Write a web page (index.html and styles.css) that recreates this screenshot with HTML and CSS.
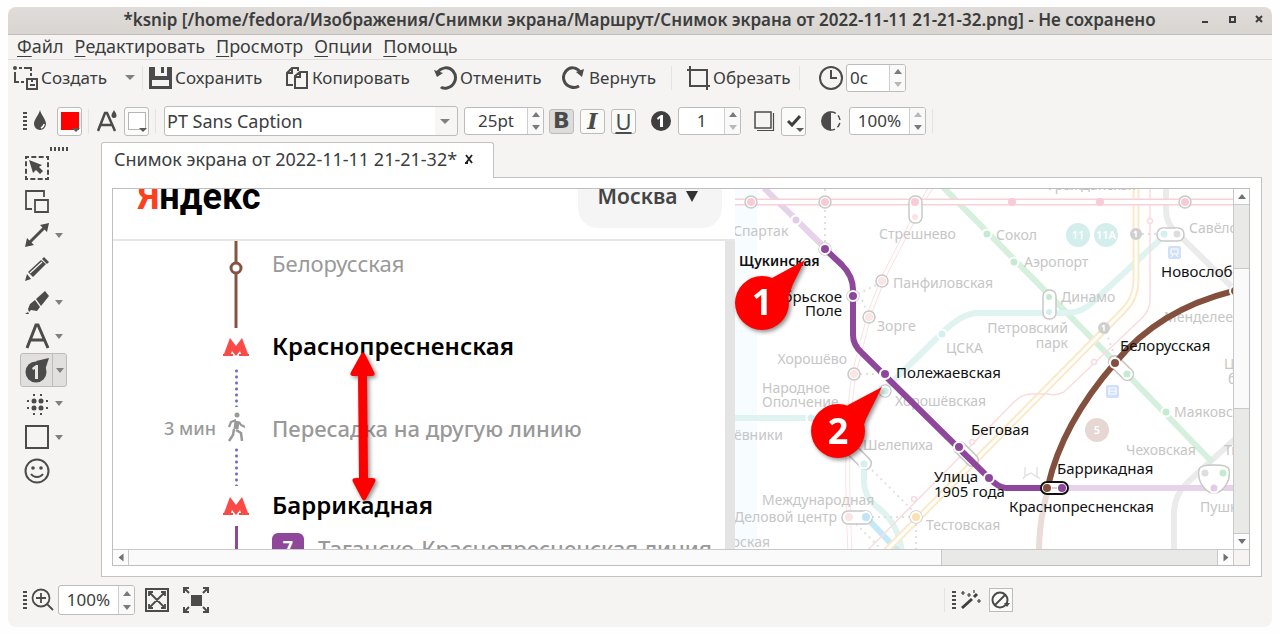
FILE: index.html
```html
<!DOCTYPE html>
<html lang="ru">
<head>
<meta charset="utf-8">
<title>ksnip</title>
<meta name="viewport" content="width=device-width, initial-scale=1">
<link rel="stylesheet" href="styles.css">
</head>
<body>
<div class="window">
  <header class="titlebar">
    <h1 class="title">*ksnip [/home/fedora/Изображения/Снимки экрана/Маршрут/Снимок экрана от 2022-11-11 21-21-32.png] - Не сохранено</h1>
    <div class="window-buttons">
      <button type="button" aria-label="Свернуть"><svg width="9" height="9"><path d="M1 7h6" stroke="#3b3d3e" stroke-width="2"/></svg></button>
      <button type="button" aria-label="Развернуть"><svg width="9" height="9"><rect x="2" y="2" width="5" height="5" fill="none" stroke="#3b3d3e" stroke-width="2"/></svg></button>
      <button type="button" aria-label="Закрыть"><svg width="9" height="9"><path d="M1 1l6 6M7 1l-6 6" stroke="#3b3d3e" stroke-width="2"/></svg></button>
    </div>
  </header>

  <nav class="menubar">
    <button type="button"><u>Ф</u>айл</button>
    <button type="button"><u>Р</u>едактировать</button>
    <button type="button"><u>П</u>росмотр</button>
    <button type="button"><u>О</u>пции</button>
    <button type="button"><u>П</u>омощь</button>
  </nav>

  <div class="toolbar actions">
    <button type="button" class="action action-new">
      <svg width="26" height="26" viewBox="0 0 26 26" fill="none" stroke="#4b4b4c" stroke-width="2"><circle cx="2" cy="3" r="2" fill="#4b4b4c" stroke="none"/><path d="M6 3h3M11 3h7v3M18 8v3M2 7v10h4M8 17h3"/><path d="M14 14h10v10H14z"/><path d="M17 20h5M19 14v3" /></svg>
      Создать
    </button>
    <button type="button" class="more" aria-label="Варианты снимка"><i class="caret"></i></button>
    <i class="separator"></i>
    <button type="button" class="action action-save">
      <svg width="24" height="24" viewBox="0 0 24 24" fill="#4b4b4c"><path fill-rule="evenodd" d="M0 1h6v9h12V1h5v22H0zM3 14v6h17v-6z"/><path d="M12 1h3v6h-3z"/></svg>
      Сохранить
    </button>
    <button type="button" class="action action-copy">
      <svg width="24" height="24" viewBox="0 0 24 24" fill="none" stroke="#4b4b4c" stroke-width="2"><path d="M7 19H1V7l5-5h6v3M6 2v5H1M9 22V10l5-4h7v16zM14 6v5H9"/></svg>
      Копировать
    </button>
    <button type="button" class="action action-undo">
      <svg width="24" height="24" viewBox="0 0 24 24" fill="none" stroke="#4b4b4c" stroke-width="3"><path d="M3 7C7 1 15 0 19 5c5 6 2 15-6 17-3 .5-5 0-6-1"/><path d="M0 4l3 7 6-4z" fill="#4b4b4c" stroke="none"/></svg>
      Отменить
    </button>
    <button type="button" class="action action-redo">
      <svg width="24" height="24" viewBox="0 0 24 24" fill="none" stroke="#4b4b4c" stroke-width="3"><path d="M19 7C15 1 8 0 4 5c-5 6-2 14 5 16 3 1 5 1 8-1"/><path d="M22 3l-2 8-6-5z" fill="#4b4b4c" stroke="none"/></svg>
      Вернуть
    </button>
    <i class="separator"></i>
    <button type="button" class="action action-crop">
      <svg width="24" height="24" viewBox="0 0 24 24" fill="none" stroke="#4b4b4c" stroke-width="2"><path d="M0 4h20v20M3 0v20h20" /></svg>
      Обрезать
    </button>
    <i class="separator"></i>
    <label class="icon" for="delay"><svg width="26" height="26" viewBox="0 0 26 26" fill="none" stroke="#4b4b4c" stroke-width="2"><circle cx="13" cy="13" r="11"/><path d="M13 5v8h6"/></svg></label>
    <div class="spin spin-delay"><input id="delay" type="text" value="0с" aria-label="Задержка"><div class="steps"><button type="button" aria-label="Больше"></button><button type="button" class="off" aria-label="Меньше"></button></div></div>
  </div>

  <div class="toolbar options">
    <i class="grip"></i>
    <span class="icon icon-drop"><svg width="14" height="22" viewBox="0 0 14 22"><path d="M7 0c1 5 6 9 6 14a6 6 0 0 1-12 0C1 9 6 5 7 0z" fill="#4b4b4c"/><path d="M8 18c2-1 3-2 3-4" stroke="#fff" stroke-width="1.500" fill="none"/></svg></span>
    <button type="button" class="swatch" aria-label="Цвет"><i class="chip red"></i><i class="caret"></i></button>
    <i class="separator"></i>
    <span class="icon icon-font"><svg width="20" height="22" viewBox="0 0 20 22" fill="none" stroke="#4b4b4c" stroke-width="2.500"><path d="M1 21L8 3h2l8 18M4 15h11"/><path d="M17 0c1 2 2.500 3.500 2.500 5.500a2.500 2.500 0 0 1-5 0C14.500 3.500 16 2 17 0z" fill="#4b4b4c" stroke="none"/></svg></span>
    <button type="button" class="swatch" aria-label="Цвет текста"><i class="chip"></i><i class="caret"></i></button>
    <i class="separator"></i>
    <div class="font-select"><select aria-label="Шрифт"><option>PT Sans Caption</option></select><i class="caret"></i></div>
    <div class="spin spin-size"><input type="text" value="25pt" aria-label="Размер шрифта"><div class="steps"><button type="button" aria-label="Больше"></button><button type="button" aria-label="Меньше"></button></div></div>
    <div class="styles">
      <button type="button" class="on" aria-label="Полужирный"><b>B</b></button>
      <button type="button" aria-label="Курсив"><em>I</em></button>
      <button type="button" aria-label="Подчёркнутый"><u>U</u></button>
    </div>
    <span class="icon icon-number"><svg width="20" height="20" viewBox="0 0 20 20"><circle cx="10" cy="10" r="10" fill="#3f3f40"/><path d="M6 7l4-3h2v12H9V7L7 9z" fill="#fff"/></svg></span>
    <div class="spin spin-number"><input type="text" value="1" aria-label="Номер"><div class="steps"><button type="button" aria-label="Больше"></button><button type="button" class="off" aria-label="Меньше"></button></div></div>
    <span class="icon icon-shadow"><svg width="22" height="22" viewBox="0 0 22 22" fill="none" stroke="#4b4b4c"><path d="M2 2h16v16H2z" stroke-width="1.500"/><path d="M20.500 3v17.500H4" stroke-width="1.200"/></svg></span>
    <button type="button" class="swatch" aria-label="Тень"><svg width="14" height="12" viewBox="0 0 14 12"><path d="M1 6l4 4 8-9" fill="none" stroke="#3f3f40" stroke-width="3"/></svg><i class="caret"></i></button>
    <span class="icon icon-opacity"><svg width="22" height="22" viewBox="0 0 22 22"><path d="M11 1a10 10 0 0 0 0 20z" fill="#4b4b4c"/><path d="M11 2a9 9 0 0 1 0 18" fill="none" stroke="#4b4b4c" stroke-width="1.500" stroke-dasharray="5 3"/></svg></span>
    <div class="spin spin-opacity"><input type="text" value="100%" aria-label="Непрозрачность"><div class="steps"><button type="button" class="off" aria-label="Больше"></button><button type="button" aria-label="Меньше"></button></div></div>
    <i class="separator"></i>
  </div>

  <div class="main">
    <aside class="tools">
      <i class="grip flat"></i>
      <ul>
        <li><button type="button" aria-label="Выделение"><svg width="26" height="26" viewBox="0 0 26 26"><path d="M2 2h22v22H2z" fill="none" stroke="#4b4b4c" stroke-width="2" stroke-dasharray="5 2.330" stroke-dashoffset="2"/><path d="M5 5l13 5-3 2 4 4-3 3-4-4-3 3z" fill="#4b4b4c"/></svg></button></li>
        <li><button type="button" aria-label="Дублировать"><svg width="26" height="26" viewBox="0 0 26 26" fill="none" stroke="#4b4b4c" stroke-width="1.800"><path d="M8 20H2V2h18v6"/><path d="M11 11h13v12H11z"/></svg></button></li>
        <li><button type="button" aria-label="Стрелка"><svg width="26" height="26" viewBox="0 0 26 26" fill="#4b4b4c"><path d="M5 21L21 5" stroke="#4b4b4c" stroke-width="3"/><path d="M25 1l-2 9-7-7zM1 25l2-9 7 7z"/></svg></button><button type="button" class="more" aria-label="Виды стрелок"><i class="caret"></i></button></li>
        <li><button type="button" aria-label="Карандаш"><svg width="26" height="26" viewBox="0 0 26 26" fill="#4b4b4c"><path d="M1 25l2-7 4 5zM4 16L17 4l5 4L9 21zM18 3l2-2 5 5-2 2z"/><path d="M6 17L18 6" stroke="#f5f4f2" stroke-width="1.300"/></svg></button></li>
        <li><button type="button" aria-label="Маркер"><svg width="26" height="26" viewBox="0 0 26 26" fill="#4b4b4c"><path d="M12 9l9-8 4 5-8 10zM11 10l5 7-3 4-6-1-2 2-1-3 2-5zM1 24l3-2 1 2z"/></svg></button><button type="button" class="more" aria-label="Виды маркеров"><i class="caret"></i></button></li>
        <li><button type="button" aria-label="Текст"><svg width="26" height="26" viewBox="0 0 26 26"><path d="M3 25L12 2h2l10 23M6 17h14" fill="none" stroke="#4b4b4c" stroke-width="3"/></svg></button><button type="button" class="more" aria-label="Виды текста"><i class="caret"></i></button></li>
        <li class="active"><button type="button" aria-label="Номер"><svg width="26" height="26" viewBox="0 0 26 26"><circle cx="12" cy="15" r="10.500" fill="#4b4b4c"/><path d="M12 4l13-3-4 12z" fill="#4b4b4c"/><path d="M8 11l4-3h2v14h-3V12l-2 1z" fill="#e6e6e5"/></svg></button><button type="button" class="more" aria-label="Виды номеров"><i class="caret"></i></button></li>
        <li><button type="button" aria-label="Размытие"><svg width="26" height="26" viewBox="0 0 26 26" fill="#4b4b4c"><circle cx="10" cy="10" r="2.500"/><circle cx="17" cy="10" r="2.500"/><circle cx="10" cy="17" r="2.500"/><circle cx="17" cy="17" r="2.500"/><path d="M9 3h2v2H9zM16 3h2v2h-2zM9 22h2v2H9zM16 22h2v2h-2zM3 9h2v2H3zM3 16h2v2H3zM22 9h2v2h-2zM22 16h2v2h-2z"/></svg></button><button type="button" class="more" aria-label="Виды размытия"><i class="caret"></i></button></li>
        <li><button type="button" aria-label="Прямоугольник"><svg width="26" height="26" viewBox="0 0 26 26"><path d="M2 2h22v22H2z" fill="none" stroke="#4b4b4c" stroke-width="2"/></svg></button><button type="button" class="more" aria-label="Виды фигур"><i class="caret"></i></button></li>
        <li><button type="button" aria-label="Стикер"><svg width="26" height="26" viewBox="0 0 26 26" fill="none" stroke="#4b4b4c" stroke-width="2"><circle cx="13" cy="13" r="11.500"/><path d="M7 16c3 4 9 4 12 0"/><circle cx="9" cy="10" r="1.800" fill="#4b4b4c" stroke="none"/><circle cx="17" cy="10" r="1.800" fill="#4b4b4c" stroke="none"/></svg></button></li>
      </ul>
    </aside>

    <section class="document">
      <div class="tab">Снимок экрана от 2022-11-11 21-21-32* <button type="button" aria-label="Закрыть вкладку"><svg width="10" height="10" viewBox="0 0 10 10"><path d="M2 1l6 8M8 1L2 9M1 9h3" stroke="#222" stroke-width="1.800" fill="none"/></svg></button></div>
      <div class="page">
        <div class="frame">
          <div class="canvas">
            <div class="route">
              <div class="route-head"><span class="logo"><i>Я</i>ндекс</span><button type="button" class="city">Москва <i></i></button></div>
              <ol class="steps-list">
                <li class="row row-pass"><span class="track"><svg width="16" height="87"><path d="M8 0v87" stroke="#875342" stroke-width="3"/><circle cx="8" cy="27" r="5" fill="#fff" stroke="#875342" stroke-width="3"/></svg></span><span class="muted">Белорусская</span></li>
                <li class="row row-station"><span class="track"><svg width="26" height="18" viewBox="0 0 26 18"><path d="M7 0l6 8 6-8 6 16h1v2h-10v-2h2l-1-3-4 5-4-5-1 3h2v2H0v-2h1z" fill="#fb4a46"/></svg></span><strong>Краснопресненская</strong></li>
                <li class="row row-walk"><span class="time">3 мин</span><span class="track walk"><i class="dots"></i><svg width="18" height="30" viewBox="0 0 18 30" fill="none" stroke="#999" stroke-width="2.200"><circle cx="10" cy="3" r="2.500" fill="#999" stroke="none"/><path d="M9 8l-5 2-2 5M12 10l2 3 4 2"/><path d="M10 9L9 17" stroke-width="5"/><path d="M9 18l5 3 1 8M7 17l-1 6-4 6" stroke-width="2.500"/></svg><i class="dots"></i></span><b class="muted">Пересадка на другую линию</b></li>
                <li class="row row-station last"><span class="track"><svg width="26" height="18" viewBox="0 0 26 18"><path d="M7 0l6 8 6-8 6 16h1v2h-10v-2h2l-1-3-4 5-4-5-1 3h2v2H0v-2h1z" fill="#fb4a46"/></svg></span><strong>Баррикадная</strong></li>
                <li class="row row-line"><span class="track purple"></span><span class="line"><b class="badge">7</b><b class="muted">Таганско-Краснопресненская линия</b></span></li>
              </ol>
            </div>
            <svg class="map" role="img" aria-label="Схема метро">
              <g transform="translate(-735 -189)" fill="none">
                <rect x="735" y="189" width="22" height="361" fill="#f7fcfe"/>
                <g stroke-width="6">
                  <path d="M1166 186v24q0 12 8 20l62 61M1236 438l-50 46q-12 12-12 30v40" stroke="#ebebeb"/>
                  <path d="M942 186l185 188L1212 462" stroke="#d5f0dc"/>
                  <path d="M880 394l62-61q20-20 36-20h88q16 0 28-12l72-67M735 418h72M864 460v22q0 14 12 24 24 18 26 48" stroke="#dff3f1"/>
                  <path d="M764 188l61 60M1062 488h174" stroke="#e6d3ea"/>
                  <path d="M1048 490q-9 30-9 62" stroke="#e9dcd9"/>
                  <path d="M866 517l32 34" stroke="#c6e9f7"/>
                </g>
                <path d="M1136 186v94q0 18-12 30L885 552" stroke="#fbeac8" stroke-width="7"/>
                <path d="M1136 186v94q0 18-12 30L885 552" stroke="#fff" stroke-width="3"/>
                <path d="M1150 186v114q0 10-8 18l-78 74q-8 4-16 2h-16q-10 0-18 8L866 552" stroke="#fadcdf" stroke-width="1.500"/>
                <path d="M932 186q-16 24-20 36l-28 54-14 36-16 62q-10 60-4 178" stroke="#fbe2e4" stroke-width="5"/>
                <path d="M932 186q-16 24-20 36l-28 54-14 36-16 62q-10 60-4 178" stroke="#fff" stroke-width="3"/>
                <path d="M735 202h501" stroke="#f9cfd9" stroke-width="7"/><path d="M735 202h501" stroke="#fff" stroke-width="4"/>
                <path d="M825 210v32M876 285l-20 10M862 300l5 12M825 189v6M860 374h22M872 470l40 40M866 517h44M856 524l26 26M916 524v28M1106 332l8 22M1156 234h-14" stroke="#e0e0e0" stroke-width="2" stroke-dasharray="2 4"/>
                <g fill="#fff" stroke="#c8c8c8" stroke-width="1.500">
                  <circle cx="751" cy="202" r="6"/><circle cx="825" cy="202" r="6"/><circle cx="1185" cy="202" r="6"/>
                  <circle cx="825" cy="249" r="6"/><circle cx="853" cy="296" r="6"/>
                  <circle cx="882" cy="281" r="6"/><circle cx="869" cy="317" r="6"/><circle cx="854" cy="374" r="6"/><circle cx="885" cy="391" r="6"/><circle cx="916" cy="517" r="6"/>
                  <rect x="909" y="196" width="13" height="27" rx="6"/><rect x="1043" y="290" width="13" height="29" rx="6"/><rect x="1157" y="228" width="27" height="13" rx="6"/>
                  <rect x="842" y="511" width="30" height="13" rx="6"/>
                  <rect x="844" y="451" width="30" height="12" rx="6" transform="rotate(45 859 457)"/>
                  <rect x="1106" y="362" width="30" height="12" rx="6" transform="rotate(45 1121 368)"/>
                  <rect x="951" y="448" width="30" height="12" rx="6" transform="rotate(45 966 454)"/>
                  <path d="M1199 470q0-5 15-5t15 5c2 14-8 23-15 23s-17-9-15-23z"/>
                </g>
                <g fill="#f9cbd6"><circle cx="751" cy="202" r="4"/><circle cx="825" cy="202" r="4"/><circle cx="915" cy="202" r="4"/><circle cx="915" cy="217" r="3" fill="#fbe2e4"/><circle cx="1012" cy="202" r="4"/><circle cx="1100" cy="202" r="4"/><circle cx="1185" cy="202" r="4"/><g fill="#fbe4e4"><circle cx="882" cy="281" r="4"/><circle cx="869" cy="317" r="4"/><circle cx="854" cy="374" r="4"/><circle cx="849" cy="517" r="4"/></g></g>
                <g fill="#fff" stroke="#fadcdf" stroke-width="1.500"><circle cx="1150" cy="221" r="2.500"/><circle cx="1094" cy="362" r="2.500"/><circle cx="972" cy="442" r="2.500"/><circle cx="914" cy="499" r="2.500"/></g>
                <g stroke="#fff" stroke-width="2"><circle cx="796" cy="220" r="4.500" fill="#e2cbe7"/><g fill="#c4ebcf"><circle cx="987" cy="234" r="4.500"/><circle cx="1014" cy="262" r="4.500"/><circle cx="1166" cy="412" r="4.500"/><circle cx="1049" cy="297" r="4"/><circle cx="1127" cy="374" r="4.500"/><circle cx="1223" cy="473" r="4.500"/></g><g fill="#d4efed"><circle cx="942" cy="334" r="4.500"/><circle cx="1049" cy="312" r="4"/><circle cx="1164" cy="234" r="4.500"/><circle cx="885" cy="391" r="4.500"/><circle cx="811" cy="418" r="4.500"/><circle cx="864" cy="464" r="4.500"/></g><circle cx="1177" cy="234" r="4.500" fill="#ddd"/><circle cx="1205" cy="473" r="4.500" fill="#ddd"/><circle cx="1214" cy="488" r="4.500" fill="#e2cbe7"/><circle cx="866" cy="517" r="5" fill="#c0e4f5"/><circle cx="916" cy="517" r="5" fill="#fbe0b0"/></g>
                <g fill="#cfcfcf"><circle cx="1136" cy="234" r="6"/><circle cx="1104" cy="328" r="6"/></g>
                <path d="M1136 231v6M1134 233l2-2M1104 325v6M1102 327l2-2" stroke="#fff" stroke-width="1.500"/>
                <g fill="#d3eeec"><circle cx="1078" cy="235" r="12"/><circle cx="1106" cy="235" r="12"/></g><circle cx="1097" cy="430" r="12" fill="#e6d7d3"/>
                <g fill="#cfe1f7"><rect x="1168" y="246" width="13" height="13" rx="2"/><rect x="1106" y="385" width="13" height="13" rx="2"/></g>
                <g stroke="#fff"><rect x="1171" y="249" width="7" height="5"/><path d="M1171 257l2-2M1178 257l-2-2"/><rect x="1109" y="388" width="7" height="6"/><path d="M1109 391h7"/></g>
                <path d="M1025 467v9l-2 3M1025 476l6-3 6 4v-10M1037 476l3 3" stroke="#e3e3e3" stroke-width="1.500"/>

                <g class="labels faded">
                  <text x="733" y="236">Спартак</text><text x="879" y="239">Стрешнево</text><text x="996" y="240">Сокол</text><text x="1189" y="233">Савёловская</text><text x="1024" y="267">Аэропорт</text><text x="893" y="288">Панфиловская</text><text x="1061" y="302">Динамо</text><text x="877" y="331">Зорге</text><text x="1164" y="322">Менделеевская</text><text x="1068" y="333" class="end">Петровский</text><text x="1068" y="348" class="end">парк</text><text x="946" y="353">ЦСКА</text><text x="847" y="364" class="end">Хорошёво</text><text x="1224" y="369">Цветной</text><text x="1228" y="384">бульвар</text><text x="762" y="393">Народное</text><text x="762" y="407">Ополчение</text><text x="895" y="406">Хорошёвская</text><text x="1174" y="417">Маяковская</text><text x="783" y="440" class="end">Мнёвники</text><text x="933" y="450" class="end">Шелепиха</text><text x="1126" y="455">Чеховская</text><text x="1224" y="455">Тверская</text><text x="762" y="505">Международная</text><text x="837" y="522" class="end">Деловой центр</text><text x="926" y="530">Тестовская</text><text x="1200" y="512">Пушкинская</text><text x="770" y="547" class="end">рская</text><text x="1048" y="190">Гражданская</text>
                </g>
                <g class="labels route-number"><text x="1078" y="239">11</text><text x="1106" y="239">11А</text><text x="1097" y="434">5</text></g>

                <path d="M1238 290Q1160 308 1115 363 1062 424 1048 486" stroke="#84503e" stroke-width="6"/>
                <path d="M825 249l17 16q11 11 11 25v45q0 10 9 18l127 125q10 10 17 10h56" stroke="#8e479b" stroke-width="6"/>
                <g stroke="#fff" stroke-width="2"><g fill="#8e479b"><circle cx="825" cy="249" r="5"/><circle cx="853" cy="296" r="5"/><circle cx="885" cy="374" r="5"/><circle cx="959" cy="447" r="5"/><circle cx="989" cy="478" r="5"/></g><g fill="#84503e"><circle cx="1115" cy="363" r="5"/><circle cx="1235" cy="291" r="5"/></g></g>
                <rect x="1041" y="482" width="27" height="12" rx="6" fill="#fff" stroke="#111" stroke-width="2"/><path d="M1052 488h5" stroke="#aaa"/><circle cx="1047" cy="488" r="4" fill="#84503e"/><circle cx="1062" cy="488" r="4" fill="#8e479b"/>
                <g class="labels"><text x="739" y="266" class="bold">Щукинская</text><text x="842" y="302" class="end">брьское</text><text x="842" y="316" class="end">Поле</text><text x="896" y="378">Полежаевская</text><text x="1161" y="277">Новослободская</text><text x="1120" y="351">Белорусская</text><text x="971" y="435">Беговая</text><text x="934" y="482">Улица</text><text x="934" y="497">1905 года</text><text x="1057" y="474">Баррикадная</text><text x="1009" y="512">Краснопресненская</text></g>
              </g>
            </svg>
            <svg class="annotations" aria-label="Аннотации">
              <g transform="translate(-113 -189)" fill="#fe0000">
                <circle cx="762" cy="303" r="27"/><path d="M805 260l-33 18-4 2 20 18 5-14z"/>
                <circle cx="838" cy="431" r="27"/><path d="M882 387l-34 18-4 4 20 16 2-6z"/>
                <path d="M361 354q2-3 4 0l9 18q2 4-3 4h-4l1 102h4q5 0 3 4l-9 17q-2 3-4 0l-9-17q-2-4 3-4h3l-1-102h-4q-5 0-3-4z"/>
                <text x="762" y="315">1</text><text x="838" y="444">2</text>
              </g>
            </svg>
          </div>
          <div class="scroll vertical"><button type="button" aria-label="Вверх"></button><i class="trough before"></i><i class="thumb"></i><i class="trough after"></i><button type="button" class="down" aria-label="Вниз"></button></div>
          <div class="scroll horizontal"><button type="button" class="left" aria-label="Влево"></button><i class="thumb"></i><i class="trough"></i><button type="button" class="right" aria-label="Вправо"></button></div>
          <i class="corner"></i>
        </div>
      </div>
    </section>
  </div>

  <footer class="statusbar">
    <i class="grip"></i>
    <label class="icon" for="zoom"><svg width="24" height="24" viewBox="0 0 24 24" fill="none" stroke="#4b4b4c" stroke-width="1.800"><circle cx="10" cy="10" r="8.500"/><path d="M10 5v10M5 10h10M16 16l6 6"/></svg></label>
    <div class="spin spin-zoom"><input id="zoom" type="text" value="100%" aria-label="Масштаб"><div class="steps"><button type="button" aria-label="Больше"></button><button type="button" aria-label="Меньше"></button></div></div>
    <button type="button" class="fit" aria-label="Вписать"><svg width="26" height="26" viewBox="0 0 26 26" fill="none" stroke="#4b4b4c"><path d="M2 2h22v22H2z" stroke-width="2"/><path d="M5 5l16 16M21 5L5 21M5 9V5h4M17 5h4v4M21 17v4h-4M9 21H5v-4" stroke-width="1.800"/></svg></button>
    <button type="button" class="fit" aria-label="Исходный размер"><svg width="26" height="26" viewBox="0 0 26 26" fill="none" stroke="#4b4b4c" stroke-width="2"><path d="M8 8h11v11H8z" fill="#4b4b4c" stroke="none"/><path d="M1 1l5 5M25 1l-5 5M25 25l-5-5M1 25l5-5M1 6V1h5M20 1h5v5M25 20v5h-5M6 25H1v-5"/></svg></button>
    <i class="separator"></i>
    <i class="grip"></i>
    <button type="button" class="wand" aria-label="Эффекты"><svg width="22" height="20" viewBox="0 0 22 20" fill="none" stroke="#3f3f40"><path d="M2 18L12 9M14 7l3-3" stroke-width="3"/><path d="M3 1v4M1 3h4M9 3v4M7 5h4M19 9v4M17 11h4M14 0v3" stroke-width="1.200"/></svg></button>
    <button type="button" class="none" aria-label="Без эффекта"><svg width="20" height="20" viewBox="0 0 20 20" fill="none" stroke="#4b4b4c" stroke-width="2"><circle cx="9" cy="10" r="7.500"/><path d="M4 15L14 5"/><path d="M13 13h6l-3 4z" fill="#4b4b4c" stroke="none"/></svg></button>
  </footer>
</div>
</body>
</html>
```
FILE: styles.css
```css
* { box-sizing: border-box; }
body {
  margin: 0;
  padding: 7px 8px 8px;
  min-height: 100vh;
  display: flex;
  background: #fefefe;
  color: #3b3d3e;
  font: 18px/22px "Noto Sans", sans-serif;
}
button, input, select { font: inherit; color: inherit; }
button { padding: 0; border: 0; background: none; display: flex; align-items: center; justify-content: center; }
svg { display: block; flex: none; }
i { font-style: normal; flex: none; }
ul, ol { margin: 0; padding: 0; list-style: none; }

.window { flex: 1; min-width: 0; display: flex; flex-direction: column; background: #f5f4f2; border-radius: 8px; overflow: hidden; }
.titlebar { height: 28px; display: flex; align-items: center; background: linear-gradient(#e0dcd9, #d8d4d0); border-bottom: 1px solid #c2bebb; padding: 0 8px 2px 70px; }
.title { flex: 1; min-width: 0; margin: 0; text-align: center; font-size: 17px; line-height: 24px; font-weight: 600; white-space: nowrap; }
.window-buttons { display: flex; gap: 18px; }
.menubar { height: 25px; display: flex; gap: 11px; padding: 0 9px 2px; border-bottom: 1px solid #dddcda; }
.menubar u { text-underline-offset: 3px; }

.toolbar { display: flex; align-items: center; }
.actions { height: 35px; padding-left: 5px; font-size: 17px; }
.action { justify-content: flex-start; gap: 2px; white-space: nowrap; }
.action-new { width: 111px; }
.action-save { width: 137px; }
.action-copy { width: 148px; }
.action-undo { width: 128px; }
.action-redo { width: 109px; gap: 3px; }
.action-crop { width: 112px; }
.more { width: 12px; }
.caret { border: 5px solid transparent; border-top-color: #808080; border-bottom: 0; width: 0; }
.separator { width: 1px; height: 24px; background: #e4e3e1; margin: 0 6px; }
.action-redo + .separator { margin: 0 15px 0 0; }
.action-crop + .separator { margin: 0 18px 0 0; }
.icon { display: flex; flex: none; }

.options { height: 52px; padding-left: 15px; }
.grip { width: 4px; height: 18px; background: repeating-linear-gradient(#4b4b4c 0 2px, transparent 2px 4px); }
.grip.flat { width: 18px; height: 4px; background: repeating-linear-gradient(90deg, #4b4b4c 0 2px, transparent 2px 4px); }
.icon-drop { margin: 0 10px 0 6px; }
.swatch { position: relative; width: 25px; height: 29px; border: 1px solid #bdbcba; border-radius: 3px; background: #fbfbfa; flex: none; }
.swatch .caret { position: absolute; right: 1px; bottom: 3px; border-width: 4px 4px 0; border-top-color: #5a5a5a; }
.chip { width: 18px; height: 18px; border: 1px solid #b5b5b5; background: #fff; }
.chip.red { background: #f00; border-color: #f00; }
.options .separator { margin: 0 8px 0 6px; }
.icon-font { margin-right: 7px; }
.font-select { position: relative; width: 294px; height: 30px; margin-right: 6px; flex: none; }
.font-select select { appearance: none; width: 100%; height: 100%; border: 1px solid #bdbcba; border-radius: 3px; padding: 0 2px; background: linear-gradient(90deg, #fff 270px, #f7f6f5 0); }
.font-select .caret { position: absolute; right: 8px; top: 13px; }
.spin { display: flex; flex: none; height: 28px; border: 1px solid #bdbcba; border-radius: 3px; background: #fff; overflow: hidden; }
.spin input { flex: 1; min-width: 0; border: 0; background: none; padding: 0; text-align: center; outline: 0; font-size: 17px; }
.steps { width: 16px; display: flex; flex-direction: column; border-left: 1px solid #d0cfcd; background: #faf9f9; }
.steps button { flex: 1; }
.steps button::before { content: ""; border: 4px solid transparent; border-top: 0; border-bottom: 5px solid #7a7a7a; }
.steps button + button::before { border-top: 5px solid #7a7a7a; border-bottom: 0; }
.steps .off::before { opacity: .5; }
.spin-delay { width: 60px; margin-left: 2px; }
.spin-delay input { text-align: left; padding-left: 3px; }
.spin-size { width: 80px; margin-right: 5px; }
.spin-number { width: 63px; margin-right: 12px; }
.spin-opacity { width: 77px; }
.spin-zoom { width: 77px; height: 30px; margin: 0 9px 0 3px; }
.styles { display: flex; gap: 6px; margin-right: 15px; }
.styles button { width: 25px; height: 25px; border: 1px solid #bdbcba; border-radius: 3px; background: #fafaf9; line-height: 22px; color: #4b4b4c; }
.styles .on { background: #dddcdb; }
.styles b { font-family: "DejaVu Sans", sans-serif; font-size: 22px; }
.styles em { font-family: "DejaVu Serif", serif; font-size: 22px; font-weight: 700; }
.styles u { font-size: 22px; text-underline-offset: 2px; }
.icon-number { margin-right: 7px; }
.icon-shadow { margin-right: 6px; }
.icon-opacity { margin: 0 7px 0 14px; }

.main { flex: 1; display: flex; min-height: 430px; }
.tools { flex: none; width: 93px; padding: 0 0 0 12px; }
.tools .grip { display: block; margin: 0 0 0 30px; }
.tools ul { height: 337px; display: grid; grid-auto-rows: 1fr; }
.tools li { display: flex; width: 47px; border: 1px solid transparent; border-radius: 3px; }
.tools li button { width: 31px; }
.tools li .more { width: 14px; }
.tools .active { background: #e1e0df; border-color: #bdbcba; }
.tools .active .more { border-left: 1px solid #bdbcba; }
.tools .caret { border-width: 5px 4px 0; }

.document { flex: 1; min-width: 0; display: flex; flex-direction: column; padding-right: 10px; margin-top: -5px; }
.tab { position: relative; z-index: 1; align-self: flex-start; min-width: 393px; height: 36px; display: flex; align-items: center; gap: 7px; padding: 0 12px 4px; margin-bottom: -1px; background: #fff; border: 1px solid #c3c2c0; border-bottom: 0; border-radius: 3px 3px 0 0; white-space: nowrap; }
.page { flex: 1; display: flex; border: 1px solid #c3c2c0; background: #fff; padding: 10px 11px 10px 10px; min-height: 0; }
.frame { flex: 1; min-width: 0; display: grid; grid-template: minmax(360px, 1fr) 16px / minmax(0, 1fr) 16px; border: 1px solid #bebebe; }
.canvas { position: relative; display: flex; overflow: hidden; contain: size; }
.route { width: 622px; flex: none; background: #fff; border-right: 10px solid #e4e4e4; }
.route-head { display: flex; justify-content: space-between; align-items: flex-start; height: 72px; margin: -20px -10px 0 0; padding: 0 13px 0 25px; background: #fff; border-bottom: 2px solid #e6e6e6; }
.logo { font: 700 36px/40px Roboto, sans-serif; color: #000; padding-top: 8px; }
.logo i { color: #fc3f1d; }
.city { width: 144px; height: 59px; background: #f5f5f5; border-radius: 20px; font-weight: 600; font-size: 21px; line-height: 28px; color: #444; gap: 9px; align-items: flex-start; padding: 13px 4px 0 0; }
.city i { border: 6px solid transparent; border-top: 11px solid #333; border-bottom: 0; margin-top: 9px; }
.row { display: grid; grid-template-columns: 103px 40px 1fr; column-gap: 0; align-items: center; font-size: 22px; line-height: 30px; color: #000; white-space: nowrap; }
.track { grid-column: 2; display: flex; justify-content: center; }
.track + * { padding-left: 16px; }
.row strong { font-weight: 600; font-size: 24px; padding-bottom: 2px; }
.muted { color: #999; font-weight: 500; }
.row-pass { height: 87px; align-items: start; }
.row-pass .muted { padding-top: 7px; font-weight: 400; }
.row-station { height: 38px; }
.row-station.last { height: 32px; }
.row-walk { height: 124px; }
.time { font-size: 18px; font-weight: 500; color: #999; text-align: right; }
.walk { flex-direction: column; align-items: center; height: 124px; padding: 2px 0 4px; gap: 5px; }
.dots { flex: 1; width: 3px; background: radial-gradient(circle, #6f6fcf 1px, transparent 2px) 0 0 / 3px 6px; }
.row-line { align-items: start; }
.purple { width: 3px; height: 60px; margin: 4px auto 0; background: #8e479b; }
.line { display: flex; gap: 14px; padding-top: 11px; }
.badge { width: 32px; height: 32px; border-radius: 6px; background: #8e479b; color: #fff; text-align: center; font-size: 18px; line-height: 28px; }
.map { flex: 1; min-width: 0; height: 100%; background: #fff; }
.labels { fill: #111; font-size: 15px; }
.labels .bold { font-weight: 600; font-size: 14px; }
.labels .end { text-anchor: end; }
.faded { fill: #c6c6c6; font-size: 14px; }
.route-number { fill: #fff; font-size: 11px; font-weight: 600; text-anchor: middle; }
.annotations { position: absolute; inset: 0; width: 100%; height: 100%; filter: drop-shadow(2px 2px 2px rgba(0, 0, 0, .45)); }
.annotations text { fill: #fff; font: 700 36px "Noto Sans", sans-serif; text-anchor: middle; }
.scroll { display: flex; background: #fafafa; }
.scroll button { flex: none; width: 15px; height: 15px; background: #fcfcfc; }
.scroll button::before { content: ""; border: 4px solid transparent; border-top: 0; border-bottom: 5px solid #707070; }
.scroll .down::before { transform: rotate(180deg); }
.scroll .left::before { transform: rotate(-90deg); }
.scroll .right::before { transform: rotate(90deg); }
.vertical { flex-direction: column; border-left: 1px solid #c9c9c9; }
.horizontal { border-top: 1px solid #c9c9c9; }
.trough { background: #e9e9e8; flex: 126; border: 0 solid #c9c9c9; border-width: 1px 0; }
.trough.before { flex: 64; }
.vertical .thumb { flex: 141; }
.horizontal .thumb { flex: 815; border-left: 1px solid #c9c9c9; }
.horizontal .trough { flex: 276; border-width: 0 1px; }
.corner { background: #f5f4f2; border: 1px solid #c9c9c9; border-width: 1px 0 0 1px; }

.statusbar { height: 50px; display: flex; align-items: center; padding: 0 259px 4px 15px; }
.statusbar .grip + .icon { margin-left: 4px; }
.fit { margin-right: 13px; }
.statusbar .separator { margin: 0 7px 0 auto; }
.wand { margin: 0 7px 0 4px; }
.none { width: 24px; height: 24px; border: 1px solid #bdbcba; background: #fafaf9; }
```
